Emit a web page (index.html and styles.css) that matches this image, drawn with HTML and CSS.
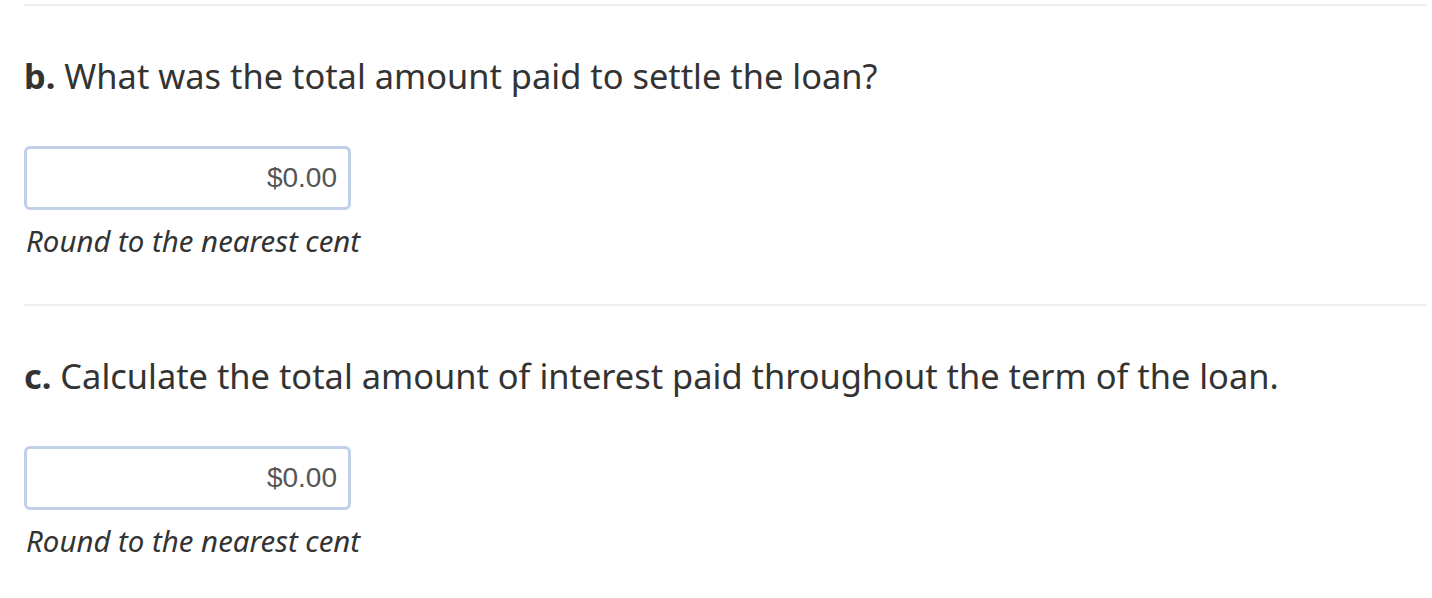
FILE: index.html
```html
<!DOCTYPE html>
<html>
<head>
<meta charset="utf-8">
<link rel="stylesheet" href="styles.css">
</head>
<body>
<div class="page">
  <section class="part">
    <p class="question"><strong>b.</strong> What was the total amount paid to settle the loan?</p>
    <div class="answer"><span class="value">$0.00</span></div>
    <p class="hint">Round to the nearest cent</p>
  </section>
  <section class="part">
    <p class="question"><strong>c.</strong> Calculate the total amount of interest paid throughout the term of the loan.</p>
    <div class="answer"><span class="value">$0.00</span></div>
    <p class="hint">Round to the nearest cent</p>
  </section>
</div>
</body>
</html>
```
FILE: styles.css
```css
html, body {
  margin: 0;
  padding: 0;
  background: #fff;
}
body {
  font-family: "Noto Sans", "Open Sans", "Liberation Sans", sans-serif;
  color: #333;
}
.page {
  padding: 4px 5px 0 24px;
}
.part {
  border-top: 2px solid #eeeeee;
  height: 298px;
  box-sizing: content-box;
}
.question {
  margin: 0;
  padding-top: 50px;
  font-size: 34.4px;
  line-height: 40px;
}
.question strong {
  font-weight: 700;
}
.answer {
  margin-top: 50px;
  width: 310px;
  height: 58px;
  border: 3px solid #bfd0e8;
  border-radius: 6px;
  display: flex;
  align-items: center;
  justify-content: flex-end;
  padding-right: 11px;
  box-sizing: content-box;
}
.value {
  font-family: "Liberation Sans", Arial, sans-serif;
  font-size: 28px;
  color: #555;
}
.hint {
  margin: 13px 0 0 2px;
  font-style: italic;
  font-size: 29.4px;
  line-height: 36px;
}
```
